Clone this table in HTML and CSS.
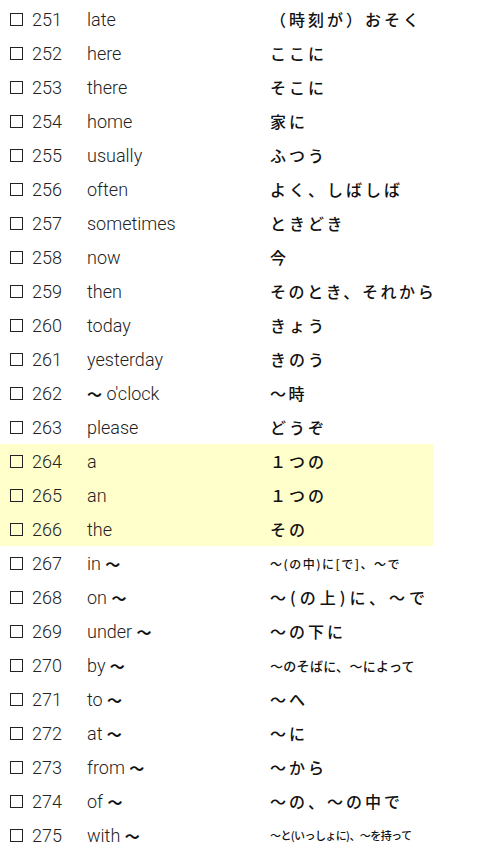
FILE: index.html
```html
<!DOCTYPE html>
<html lang="ja">
<head>
    <meta charset="UTF-8">
    <title>単語リスト 251-275</title>
    <link rel="stylesheet" href="styles.css">
</head>
<body>

    <div class="wordlist">
        <div class="row"><span class="box"></span><span class="num">251</span><span class="en">late</span><span class="ja wide">（時刻が）おそく</span></div>
        <div class="row"><span class="box"></span><span class="num">252</span><span class="en">here</span><span class="ja wide">ここに</span></div>
        <div class="row"><span class="box"></span><span class="num">253</span><span class="en">there</span><span class="ja wide">そこに</span></div>
        <div class="row"><span class="box"></span><span class="num">254</span><span class="en">home</span><span class="ja wide">家に</span></div>
        <div class="row"><span class="box"></span><span class="num">255</span><span class="en">usually</span><span class="ja wide">ふつう</span></div>
        <div class="row"><span class="box"></span><span class="num">256</span><span class="en">often</span><span class="ja wide">よく、しばしば</span></div>
        <div class="row"><span class="box"></span><span class="num">257</span><span class="en">sometimes</span><span class="ja wide">ときどき</span></div>
        <div class="row"><span class="box"></span><span class="num">258</span><span class="en">now</span><span class="ja wide">今</span></div>
        <div class="row"><span class="box"></span><span class="num">259</span><span class="en">then</span><span class="ja">そのとき、それから</span></div>
        <div class="row"><span class="box"></span><span class="num">260</span><span class="en">today</span><span class="ja wide">きょう</span></div>
        <div class="row"><span class="box"></span><span class="num">261</span><span class="en">yesterday</span><span class="ja wide">きのう</span></div>
        <div class="row"><span class="box"></span><span class="num">262</span><span class="en"><span class="wave">～</span> o'clock</span><span class="ja">～時</span></div>
        <div class="row"><span class="box"></span><span class="num">263</span><span class="en">please</span><span class="ja wide">どうぞ</span></div>
        <div class="row mark"><span class="box"></span><span class="num">264</span><span class="en">a</span><span class="ja wide">１つの</span></div>
        <div class="row mark"><span class="box"></span><span class="num">265</span><span class="en">an</span><span class="ja wide">１つの</span></div>
        <div class="row mark"><span class="box"></span><span class="num">266</span><span class="en">the</span><span class="ja wide">その</span></div>
        <div class="row"><span class="box"></span><span class="num">267</span><span class="en">in <span class="wave">～</span></span><span class="ja small">～(の中)に[で]、～で</span></div>
        <div class="row"><span class="box"></span><span class="num">268</span><span class="en">on <span class="wave">～</span></span><span class="ja paren">～(の上)に、～で</span></div>
        <div class="row"><span class="box"></span><span class="num">269</span><span class="en">under <span class="wave">～</span></span><span class="ja wide">～の下に</span></div>
        <div class="row"><span class="box"></span><span class="num">270</span><span class="en">by <span class="wave">～</span></span><span class="ja mid">～のそばに、～によって</span></div>
        <div class="row"><span class="box"></span><span class="num">271</span><span class="en">to <span class="wave">～</span></span><span class="ja wide">～へ</span></div>
        <div class="row"><span class="box"></span><span class="num">272</span><span class="en">at <span class="wave">～</span></span><span class="ja wide">～に</span></div>
        <div class="row"><span class="box"></span><span class="num">273</span><span class="en">from <span class="wave">～</span></span><span class="ja wide">～から</span></div>
        <div class="row"><span class="box"></span><span class="num">274</span><span class="en">of <span class="wave">～</span></span><span class="ja wide">～の、～の中で</span></div>
        <div class="row"><span class="box"></span><span class="num">275</span><span class="en">with <span class="wave">～</span></span><span class="ja tiny">～と(いっしょに)、～を持って</span></div>
    </div>

</body>
</html>
```

FILE: styles.css
```css
body {
    margin: 0;
    background: #fff;
    font-family: Roboto, "Liberation Sans", sans-serif;
}
.wordlist {
    padding-top: 2px;
    width: 433px;
}
.row {
    display: grid;
    grid-template-columns: 22px 55px 183px 1fr;
    align-items: center;
    height: 34px;
    padding-left: 10px;
    white-space: nowrap;
}
.row.mark {
    background: #ffffcc;
}
.box {
    width: 13px;
    height: 13px;
    box-sizing: border-box;
    border: 1.5px solid #222;
    margin-top: 1px;
}
.num, .en {
    font-size: 18px;
    font-weight: 300;
    color: #222;
}
.wave {
    font-family: "Noto Sans CJK JP", sans-serif;
    font-weight: bold;
    font-size: 15px;
    color: #111;
}
.ja {
    font-family: "Noto Sans CJK JP", sans-serif;
    font-weight: 500;
    font-size: 16px;
    color: #111;
    letter-spacing: 2.6px;
}
.ja.wide {
    letter-spacing: 3px;
}
.ja.paren {
    letter-spacing: 4px;
}
.ja.mid {
    font-size: 13px;
    letter-spacing: 0.3px;
}
.ja.small {
    font-size: 12px;
    letter-spacing: 1.5px;
}
.ja.tiny {
    font-size: 11px;
    letter-spacing: -0.6px;
}
```
